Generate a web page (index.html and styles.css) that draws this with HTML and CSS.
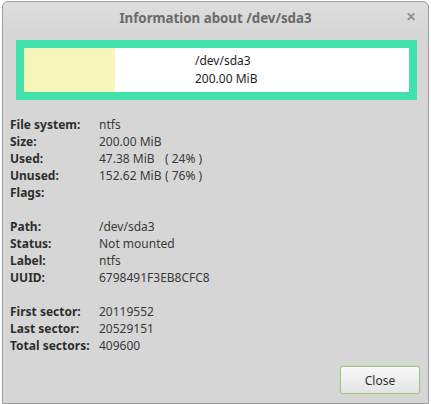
FILE: index.html
```html
<!DOCTYPE html>
<html lang="en">
<head>
  <meta charset="UTF-8">
  <title>Information about /dev/sda3</title>
  <link rel="stylesheet" href="styles.css">
</head>
<body>
  <div class="window">
    <div class="titlebar">
      <span class="title">Information about /dev/sda3</span>
      <span class="close-x">&#x2715;</span>
    </div>
    <div class="content">
      <div class="partition">
        <div class="part-inner">
          <div class="used-bar"></div>
          <div class="part-text">
            <div>/dev/sda3</div>
            <div>200.00 MiB</div>
          </div>
        </div>
      </div>

      <div class="info">
        <div class="lbl">File system:</div><div class="val">ntfs</div><div></div>
        <div class="lbl">Size:</div><div class="val">200.00 MiB</div><div></div>
        <div class="lbl">Used:</div><div class="val">47.38 MiB</div><div class="pct">( 24% )</div>
        <div class="lbl">Unused:</div><div class="val">152.62 MiB</div><div class="pct">( 76% )</div>
        <div class="lbl">Flags:</div><div class="val"></div><div></div>
        <div class="blank"></div>
        <div class="lbl">Path:</div><div class="val">/dev/sda3</div><div></div>
        <div class="lbl">Status:</div><div class="val">Not mounted</div><div></div>
        <div class="lbl">Label:</div><div class="val">ntfs</div><div></div>
        <div class="lbl">UUID:</div><div class="val">6798491F3EB8CFC8</div><div></div>
        <div class="blank"></div>
        <div class="lbl">First sector:</div><div class="val">20119552</div><div></div>
        <div class="lbl">Last sector:</div><div class="val">20529151</div><div></div>
        <div class="lbl">Total sectors:</div><div class="val">409600</div><div></div>
      </div>

      <div class="actions">
        <button class="btn-close">Close</button>
      </div>
    </div>
  </div>
</body>
</html>
```
FILE: styles.css
```css
html, body {
  margin: 0;
  background: #ffffff;
}

body {
  padding: 1px 2px 0 2px;
  font-family: "Noto Sans", sans-serif;
  font-size: 12px;
  color: #2e2e2e;
}

.window {
  width: 425px;
  height: 401px;
  background: #d6d6d6;
  border: 1px solid #9c9c9c;
  border-radius: 6px 6px 0 0;
  display: flex;
  flex-direction: column;
}

.titlebar {
  height: 30px;
  display: flex;
  align-items: center;
  justify-content: center;
  position: relative;
  background: linear-gradient(#dedede, #d6d6d6);
  border-radius: 6px 6px 0 0;
}

.title {
  font-size: 13.3px;
  font-weight: bold;
  color: #6a6a6a;
  padding-top: 1px;
}

.close-x {
  position: absolute;
  right: 12px;
  top: 6px;
  font-size: 12px;
  font-weight: bold;
  color: #8e8e8e;
}

.content {
  flex: 1;
  display: flex;
  flex-direction: column;
  padding: 8px 11px 0 13px;
}

.partition {
  border: 8px solid #41e2a9;
  height: 44px;
}

.part-inner {
  height: 100%;
  display: flex;
  background: #ffffff;
}

.used-bar {
  width: 91px;
  background: #f7f7bc;
}

.part-text {
  margin-left: 80px;
  padding-top: 4px;
  line-height: 18px;
  color: #1e1e1e;
}

.info {
  margin-top: 16px;
  margin-left: -6px;
  display: grid;
  grid-template-columns: 89px 66px auto;
  line-height: 17px;
  color: #3a3a3a;
}

.val {
  white-space: nowrap;
}

.lbl {
  font-weight: bold;
  color: #2e2e2e;
}

.blank {
  grid-column: 1 / 4;
  height: 17px;
}

.actions {
  margin-top: auto;
  margin-right: -3px;
  display: flex;
  justify-content: flex-end;
  padding-bottom: 9px;
}

.btn-close {
  width: 80px;
  height: 28px;
  font-family: "Noto Sans", sans-serif;
  font-size: 12px;
  color: #2e2e2e;
  background: linear-gradient(#f8f8f8, #e4e4e4);
  border: 1px solid #a9c28a;
  border-radius: 3px;
  box-shadow: 0 0 0 1px #c9dbb3;
}
```
